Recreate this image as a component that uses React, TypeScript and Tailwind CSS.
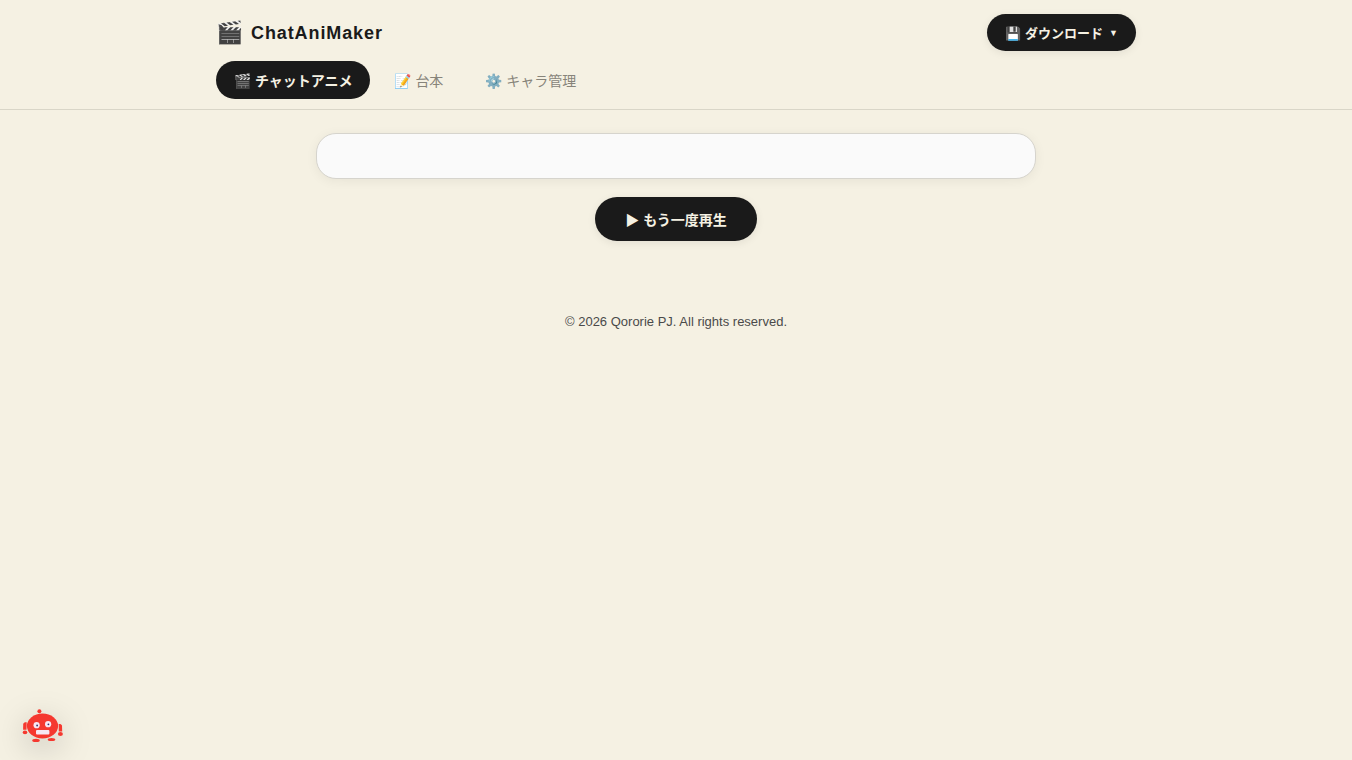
const fonts = "font-['Liberation_Sans','Noto_Sans_CJK_JP',sans-serif]";

const tabs = [
  { icon: "🎬", label: "チャットアニメ", active: true },
  { icon: "📝", label: "台本", active: false },
  { icon: "⚙️", label: "キャラ管理", active: false },
];

const RobotIcon = () => (
  <svg
    viewBox="0 0 44 36"
    className="h-9 w-11 overflow-visible drop-shadow-[0_8px_16px_rgba(0,0,0,0.2)]"
    fill="#f5382f"
    aria-hidden="true"
  >
    <circle cx="19.4" cy="3.2" r="2" />
    <ellipse cx="22.5" cy="18" rx="15.6" ry="12.4" />
    <path d="M3.2 16c.3-1.4 1.7-2 3.5-1.8l-.2 7.6H3.1z" />
    <ellipse cx="5" cy="24.4" rx="2.3" ry="1.8" />
    <path d="M38.7 16c1.7-.2 3 .4 3.3 1.8l.2 5.8h-3.4z" />
    <ellipse cx="40.4" cy="26" rx="2.5" ry="2" />
    <ellipse cx="16" cy="32.4" rx="3.8" ry="1.6" />
    <ellipse cx="31.5" cy="31.5" rx="3.8" ry="1.6" />
    <circle cx="16.6" cy="17.2" r="3.1" fill="#f7e8f3" />
    <circle cx="28.1" cy="16.2" r="3.1" fill="#f7e8f3" />
    <circle cx="17.1" cy="17.5" r="0.9" fill="#35306c" />
    <circle cx="28.4" cy="16.3" r="0.9" fill="#35306c" />
    <rect x="16" y="22" width="13.4" height="4.6" rx="1" fill="#f7e8f3" />
  </svg>
);

const Header = () => (
  <header className="border-b border-[#d9d6c8] px-5 pt-3.5 pb-2.5">
    <div className="mx-auto flex max-w-[920px] flex-col gap-2.5">
      <div className="flex items-center justify-between">
        <h1 className="flex items-center gap-2 text-lg leading-9 font-bold tracking-wider">
          <span className="text-[22px] tracking-normal">🎬</span>
          ChatAniMaker
        </h1>
        <button
          type="button"
          className="flex h-[37px] items-center gap-1.5 rounded-full bg-[#1a1a1a] px-[18px] pt-0.5 text-[13px] font-bold text-[#f5f1e3] shadow-[0_2px_8px_rgba(0,0,0,0.08)]"
        >
          💾 ダウンロード
          <span className="text-[9px]">▼</span>
        </button>
      </div>
      <nav className="flex gap-1.5">
        {tabs.map((tab) => (
          <button
            key={tab.label}
            type="button"
            className={`h-[38px] rounded-full px-[18px] pt-0.5 text-sm ${
              tab.active ? "bg-[#1a1a1a] font-bold text-[#f5f1e3]" : "text-[#87847a]"
            }`}
          >
            {tab.icon} {tab.label}
          </button>
        ))}
      </nav>
    </div>
  </header>
);

export default function App() {
  return (
    <div className={`min-h-screen bg-[#f5f1e3] text-[#1a1a1a] ${fonts}`}>
      <Header />
      <main className="flex flex-col items-center px-5 pt-[23px]">
        <div className="w-full max-w-[720px] rounded-[20px] border border-[#d6d4cd] bg-[#fafafa] p-[22px] shadow-[0_2px_12px_rgba(0,0,0,0.06)]" />
        <button
          type="button"
          className="mt-[18px] h-11 rounded-full bg-[#1a1a1a] px-[30px] pt-0.5 text-sm font-bold text-[#f5f1e3] shadow-[0_2px_8px_rgba(0,0,0,0.08)]"
        >
          ▶ もう一度再生
        </button>
      </main>
      <footer className="pt-[71px] pb-5 text-center text-[13px] leading-5 text-[#4a4a4a]">
        © 2026 Qororie PJ. All rights reserved.
      </footer>
      <button
        type="button"
        aria-label="Qororie"
        className="fixed bottom-3 left-5 flex size-11 items-center justify-center"
      >
        <RobotIcon />
      </button>
    </div>
  );
}
